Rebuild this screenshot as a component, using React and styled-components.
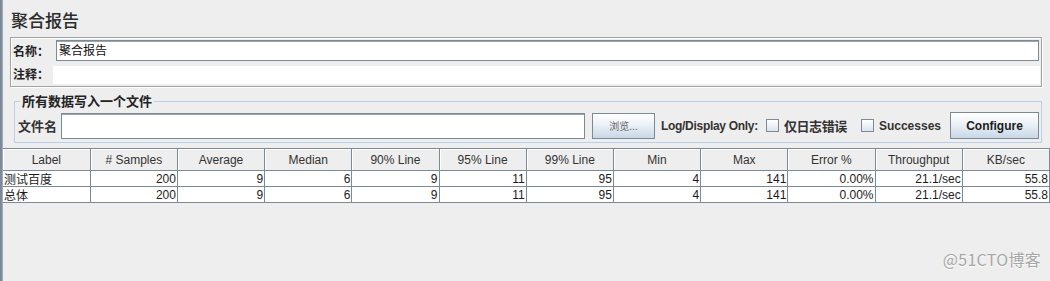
import React from "react";
import styled, { createGlobalStyle } from "styled-components";

const GlobalStyle = createGlobalStyle`
  html, body { margin: 0; padding: 0; background: #eeeeee; }
  body { font-family: "Liberation Sans", "Noto Sans CJK SC", sans-serif; color: #333; }
  * { box-sizing: border-box; }
`;

const CJK = `"Noto Sans CJK SC", "Liberation Sans", sans-serif`;

const Page = styled.div`
  position: relative;
  display: flex;
  width: 1050px;
  height: 281px;
  overflow: hidden;
  background: #eeeeee;
`;

const SideBar = styled.div`
  width: 3px;
  flex: none;
  background: #7d8a9a;
  border-right: 1px solid #a3adb9;
`;

const Main = styled.div`
  flex: 1;
  display: flex;
  flex-direction: column;
  min-width: 0;
`;

const Title = styled.h1`
  margin: 8px 0 0 8px;
  height: 29px;
  font-family: ${CJK};
  font-size: 17px;
  font-weight: 500;
  line-height: 24px;
  color: #2c2c2c;
`;

const Panel = styled.div`
  margin: 0 8px 0 7px;
  border: 1px solid #a3a3a3;
  box-shadow: 1px 1px 0 #ffffff, inset 1px 1px 0 #ffffff;
  padding: 1px 1px 1px 2px;
  display: flex;
  flex-direction: column;
`;

const FieldRow = styled.div`
  display: flex;
  align-items: center;
  height: ${(p) => p.$h}px;
`;

const FieldLabel = styled.label`
  width: ${(p) => p.$w}px;
  flex: none;
  font-family: ${CJK};
  font-weight: 700;
  font-size: 12px;
  color: #222;
  white-space: nowrap;
`;

const NameInput = styled.div`
  flex: 1;
  height: 21px;
  margin-right: 1px;
  background: #fff;
  border: 1px solid #7d8997;
  box-shadow: inset 0 1px 0 #9aa5b1;
  font-family: ${CJK};
  font-size: 12px;
  line-height: 18px;
  padding-left: 2px;
  color: #111;
`;

const CommentField = styled.div`
  flex: 1;
  height: 18px;
  margin-top: 2px;
  background: #fff;
`;

const Group = styled.fieldset`
  margin: 6px 8px 0 11px;
  padding: 3px 2px 3px 3px;
  border: 1px solid #b8cfe5;
  min-width: 0;
`;

const Legend = styled.legend`
  margin-left: 2px;
  padding: 0 2px;
  font-family: ${CJK};
  font-weight: 700;
  font-size: 13px;
  line-height: 16px;
  color: #222;
`;

const Toolbar = styled.div`
  display: flex;
  align-items: center;
  height: 27px;
`;

const BoldLabel = styled.span`
  font-family: ${(p) => (p.$latin ? `"Liberation Sans", sans-serif` : CJK)};
  font-weight: 700;
  font-size: ${(p) => (p.$latin ? 12 : 13)}px;
  letter-spacing: ${(p) => p.$ls || 0}px;
  color: #333;
  white-space: nowrap;
  margin-left: ${(p) => p.$ml || 0}px;
`;

const FileInput = styled.div`
  flex: 1;
  height: 26px;
  margin-left: 4px;
  background: #fff;
  border: 1px solid #7d8997;
  box-shadow: inset 0 1px 0 #9aa5b1;
`;

const Button = styled.button`
  height: ${(p) => p.$h}px;
  width: ${(p) => p.$w}px;
  margin-left: ${(p) => p.$ml}px;
  flex: none;
  padding: 0;
  border: 1px solid #7a8a99;
  border-radius: 0;
  background: linear-gradient(to bottom, #ffffff 0%, #eef3f8 40%, #c8d7e6 100%);
  font-family: ${(p) => (p.$small ? CJK : `"Liberation Sans", sans-serif`)};
  font-weight: ${(p) => (p.$small ? 400 : 700)};
  font-size: ${(p) => (p.$small ? 10 : 12)}px;
  color: ${(p) => (p.$small ? "#666" : "#1c1c1c")};
`;

const Check = styled.span`
  width: 13px;
  height: 13px;
  flex: none;
  margin-left: ${(p) => p.$ml}px;
  margin-right: 5px;
  border: 1px solid #7d8997;
  background: linear-gradient(to bottom, #ffffff, #dbe4ee);
`;

const Table = styled.table`
  margin-top: 5px;
  width: 100%;
  border-collapse: collapse;
  table-layout: fixed;
  font-family: "Liberation Sans", "Noto Sans CJK SC", sans-serif;
  font-size: 12px;
`;

const Th = styled.th`
  height: 22px;
  padding: 0;
  font-weight: 400;
  color: #333;
  background: #eeeeee;
  border-top: 1px solid #7a8a99;
  border-bottom: 1px solid #7a8a99;
  border-right: 1px solid #7a8a99;
  box-shadow: inset 1px 1px 0 #ffffff;
  text-align: center;
`;

const Td = styled.td`
  height: 16px;
  padding: 0 1px;
  line-height: 14px;
  background: #fff;
  color: #1c1c1c;
  border-right: 1px solid #7a8a99;
  border-bottom: 1px solid #7a8a99;
  text-align: ${(p) => (p.$left ? "left" : "right")};
  white-space: nowrap;
  overflow: hidden;
  font-family: ${(p) => (p.$left ? CJK : `"Liberation Sans", sans-serif`)};
`;

const Watermark = styled.div`
  position: absolute;
  right: 9px;
  bottom: 10px;
  font-family: ${CJK};
  font-size: 16px;
  letter-spacing: 0.3px;
  color: #a6a6a6;
  text-shadow: 0 1px 0 #ffffff;
`;

const headers = [
  "Label", "# Samples", "Average", "Median", "90% Line", "95% Line",
  "99% Line", "Min", "Max", "Error %", "Throughput", "KB/sec",
];

const rows = [
  ["测试百度", "200", "9", "6", "9", "11", "95", "4", "141", "0.00%", "21.1/sec", "55.8"],
  ["总体", "200", "9", "6", "9", "11", "95", "4", "141", "0.00%", "21.1/sec", "55.8"],
];

export default function App() {
  return (
    <>
      <GlobalStyle />
      <Page>
        <SideBar />
        <Main>
          <Title>聚合报告</Title>
          <Panel>
            <FieldRow $h={23}>
              <FieldLabel $w={43}>名称：</FieldLabel>
              <NameInput>聚合报告</NameInput>
            </FieldRow>
            <FieldRow $h={23}>
              <FieldLabel $w={40}>注释：</FieldLabel>
              <CommentField />
            </FieldRow>
          </Panel>
          <Group>
            <Legend>所有数据写入一个文件</Legend>
            <Toolbar>
              <BoldLabel>文件名</BoldLabel>
              <FileInput />
              <Button $w={63} $h={26} $ml={7} $small>浏览...</Button>
              <BoldLabel $latin $ml={6} $ls={-0.3}>Log/Display Only:</BoldLabel>
              <Check $ml={8} />
              <BoldLabel $ls={-0.4}>仅日志错误</BoldLabel>
              <Check $ml={14} />
              <BoldLabel $latin>Successes</BoldLabel>
              <Button $w={89} $h={27} $ml={9}>Configure</Button>
            </Toolbar>
          </Group>
          <Table>
            <thead>
              <tr>
                {headers.map((h) => (
                  <Th key={h}>{h}</Th>
                ))}
              </tr>
            </thead>
            <tbody>
              {rows.map((r, i) => (
                <tr key={i}>
                  {r.map((c, j) => (
                    <Td key={j} $left={j === 0}>{c}</Td>
                  ))}
                </tr>
              ))}
            </tbody>
          </Table>
        </Main>
        <Watermark>@51CTO博客</Watermark>
      </Page>
    </>
  );
}
